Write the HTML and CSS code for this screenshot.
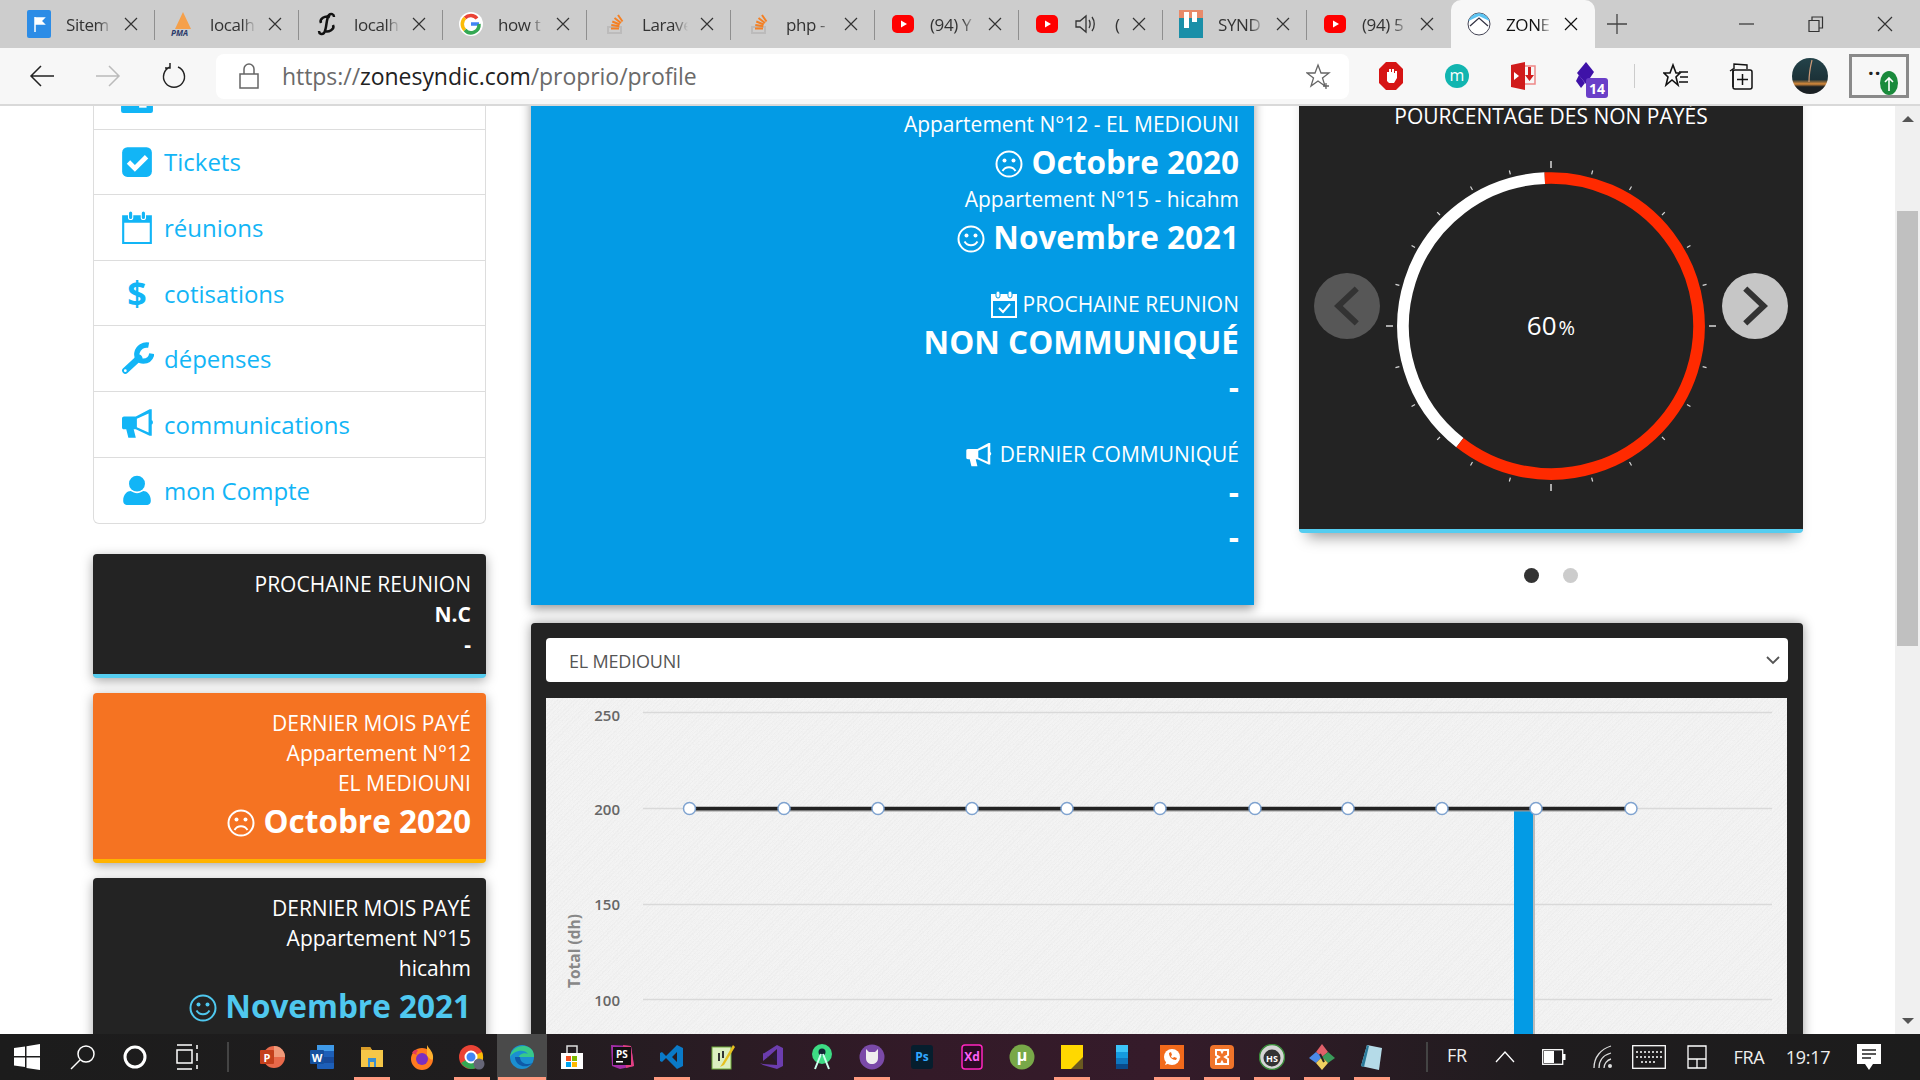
FILE: index.html
```html
<!DOCTYPE html>
<html lang="fr">
<head>
    <meta charset="UTF-8">
    <title>ZONE SYNDIC</title>
    <link rel="stylesheet" href="styles.css">
</head>
<body>
<svg class="defs" width="0" height="0">
    <symbol id="i-x" viewBox="0 0 14 14"><path d="M1 1l12 12M13 1L1 13" fill="none" stroke="currentColor" stroke-width="1.2"/></symbol>
    <symbol id="i-yt" viewBox="0 0 24 24"><rect x="1" y="3" width="22" height="18" rx="5" fill="#f00"/><path d="M10 8.5l6 3.5-6 3.5z" fill="#fff"/></symbol>
    <symbol id="i-so" viewBox="0 0 24 24"><path d="M5 15h13v6H5z" fill="none" stroke="#bcbbbb" stroke-width="2"/><path d="M8 16.5h8M8.300 13l8 1.200M9.300 9.500l7.500 3M11.500 6l6.500 5M15 3l4.500 6.500" fill="none" stroke="#f48024" stroke-width="2"/></symbol>
    <symbol id="i-smile" viewBox="0 0 28 28"><circle cx="14" cy="14" r="12.500" fill="none" stroke="currentColor" stroke-width="2"/><circle cx="9.500" cy="10.500" r="2" fill="currentColor"/><circle cx="18.500" cy="10.500" r="2" fill="currentColor"/><path d="M7.500 16.500c3 5 10 5 13 0" fill="none" stroke="currentColor" stroke-width="2"/></symbol>
    <symbol id="i-frown" viewBox="0 0 28 28"><circle cx="14" cy="14" r="12.500" fill="none" stroke="currentColor" stroke-width="2"/><circle cx="9.500" cy="10.500" r="2" fill="currentColor"/><circle cx="18.500" cy="10.500" r="2" fill="currentColor"/><path d="M7.500 21c3-5 10-5 13 0" fill="none" stroke="currentColor" stroke-width="2"/></symbol>
    <symbol id="i-horn" viewBox="0 0 32 28"><path fill-rule="evenodd" d="M26 0h2v10.500c1.500.5 1.500 3.500 0 4V25h-2L13 19h-2l2 8H6l-2-8H2c-1.500 0-2-1-2-2V9c0-1 .5-2 2-2h11zM14 9v8l11 5V4z" fill="currentColor"/></symbol>
    <filter id="paper" x="0" y="0" width="100%" height="100%"><feTurbulence type="fractalNoise" baseFrequency=".8" numOctaves="2" seed="4"/><feColorMatrix values="0 0 0 0 .6  0 0 0 0 .6  0 0 0 0 .6  0 0 0 .3 -.11"/></filter>
</svg>

<div class="app">
    <!-- onglets -->
    <div class="tabs">
        <div class="tab"><svg class="fav" viewBox="0 0 24 24"><rect width="24" height="28" y="-2" rx="2" fill="#2c8ce6"/><path d="M8 5v15M8 6h9l-3 3 3 3H8" fill="#fff" stroke="#fff" stroke-width="1.500"/></svg><span class="tab-title">Sitem</span><svg class="tab-x"><use href="#i-x"/></svg></div>
        <div class="tab"><svg class="fav" viewBox="0 0 24 24"><path d="M12 0l2 17H4zM12 0l8 17h-6z" fill="#f5a04a"/><text x="0" y="24" class="fav-pma">PMA</text></svg><span class="tab-title">localh</span><svg class="tab-x"><use href="#i-x"/></svg></div>
        <div class="tab"><svg class="fav" viewBox="0 0 24 24"><path d="M19 5c0-3-3-4-5-2-3 3-2 14-5 18-2 2-5 1-5-2M6 11c-2-4 4-8 9-6M18 13c2 4-4 8-9 6" fill="none" stroke="#111" stroke-width="2.500"/></svg><span class="tab-title">localh</span><svg class="tab-x"><use href="#i-x"/></svg></div>
        <div class="tab"><svg class="fav" viewBox="0 0 24 24"><circle cx="12" cy="12" r="12" fill="#fff"/><path d="M20 12h-8" stroke="#4285f4" stroke-width="3.500"/><path d="M18 6.500a8 8 0 0 0-12-.5" fill="none" stroke="#ea4335" stroke-width="3.500"/><path d="M6 6a8 8 0 0 0 0 12" fill="none" stroke="#fbbc05" stroke-width="3.500"/><path d="M6 18a8 8 0 0 0 14-6" fill="none" stroke="#34a853" stroke-width="3.500"/></svg><span class="tab-title">how t</span><svg class="tab-x"><use href="#i-x"/></svg></div>
        <div class="tab"><svg class="fav"><use href="#i-so"/></svg><span class="tab-title">Larave</span><svg class="tab-x"><use href="#i-x"/></svg></div>
        <div class="tab"><svg class="fav"><use href="#i-so"/></svg><span class="tab-title">php -</span><svg class="tab-x"><use href="#i-x"/></svg></div>
        <div class="tab"><svg class="fav"><use href="#i-yt"/></svg><span class="tab-title">(94) Y</span><svg class="tab-x"><use href="#i-x"/></svg></div>
        <div class="tab"><svg class="fav"><use href="#i-yt"/></svg><svg class="fav speaker" viewBox="0 0 24 24"><path d="M3 9h4l6-5v16l-6-5H3z" fill="none" stroke="#333" stroke-width="1.300"/><path d="M16 8c1.500 2 1.500 6 0 8M19 5c3 4 3 10 0 14" fill="none" stroke="#333" stroke-width="1.300"/></svg><span class="tab-title short">(</span><svg class="tab-x"><use href="#i-x"/></svg></div>
        <div class="tab"><svg class="fav" viewBox="0 0 24 24"><rect width="24" height="28" y="-2" fill="#1a8fa8"/><rect y="-2" width="24" height="8" fill="#e88a6a"/><rect x="5" y="0" width="5" height="16" fill="#fff"/><rect x="13" y="0" width="5" height="10" fill="#fff"/></svg><span class="tab-title">SYND</span><svg class="tab-x"><use href="#i-x"/></svg></div>
        <div class="tab no-sep"><svg class="fav"><use href="#i-yt"/></svg><span class="tab-title">(94) 5</span><svg class="tab-x"><use href="#i-x"/></svg></div>
        <div class="tab active"><svg class="fav" viewBox="0 0 24 24"><circle cx="12" cy="12" r="11" fill="#fff" stroke="#445" stroke-width="1"/><path d="M1.500 9a11 11 0 0 1 21 0L12 4z" fill="#5cc4f2"/><path d="M3 14l9-8 9 8" fill="none" stroke="#334" stroke-width="1.300"/></svg><span class="tab-title">ZONE</span><svg class="tab-x"><use href="#i-x"/></svg></div>
        <svg class="new-tab" viewBox="0 0 20 20"><path d="M10 0v20M0 10h20" stroke="#444" stroke-width="1.300"/></svg>
        <div class="win-btns">
            <svg viewBox="0 0 16 16"><path d="M0 8h15" stroke="#333" stroke-width="1.200"/></svg>
            <svg viewBox="0 0 16 16"><path d="M1 4.500h10v11H1zM4 4.500V1h10.500v11H11" fill="none" stroke="#333" stroke-width="1.200"/></svg>
            <svg viewBox="0 0 16 16"><path d="M1 1l14 14M15 1L1 15" stroke="#333" stroke-width="1.200"/></svg>
        </div>
    </div>

    <!-- barre d'adresse -->
    <div class="toolbar">
        <svg class="tool back" viewBox="0 0 26 26"><path d="M25 13H2M12 3L2 13l10 10" fill="none" stroke="#222" stroke-width="1.500"/></svg>
        <svg class="tool fwd" viewBox="0 0 26 26"><path d="M1 13h23M14 3l10 10-10 10" fill="none" stroke="#bbb" stroke-width="1.500"/></svg>
        <svg class="tool reload" viewBox="0 0 26 26"><path d="M9 4a10.500 10.500 0 1 0 8 0M9 0v5H4" fill="none" stroke="#222" stroke-width="1.500"/></svg>
        <div class="address">
            <svg class="lock" viewBox="0 0 20 26"><path d="M5 11V6a5 5 0 0 1 10 0v5" fill="none" stroke="#666" stroke-width="1.500"/><rect x="1" y="11" width="18" height="14" fill="none" stroke="#666" stroke-width="1.500"/></svg>
            <span class="url">https://<b>zonesyndic.com</b>/proprio/profile</span>
            <svg class="star" viewBox="0 0 26 26"><path d="M12 2l3 8h8l-6.500 5 2.500 8-7-5-7 5 2.500-8L1 10h8z" fill="none" stroke="#666" stroke-width="1.300"/><path d="M20 20v6M17 23h6" stroke="#666" stroke-width="1.300"/></svg>
        </div>
        <div class="ext-group">
            <svg class="ext e1" viewBox="0 0 26 30"><path d="M8 1h10l7 7v14l-7 7H8l-7-7V8z" fill="#d61414"/><path d="M9 20v-9h2V8h2v3h1V8h2v4h1v-2h2v7l-3 5h-5z" fill="#fff"/></svg>
            <svg class="ext e2" viewBox="0 0 26 26"><circle cx="13" cy="13" r="12" fill="#12b5b0"/><text x="13" y="18" class="ext-m">m</text></svg>
            <svg class="ext e3" viewBox="0 0 26 28"><path d="M1 3l14-3v28L1 25z" fill="#d01c1c"/><path d="M15 4h10v18H15" fill="none" stroke="#e88" stroke-width="1.500"/><path d="M18 5h3v8h3l-4.500 6-4.500-6h3z" fill="#d01c1c"/><path d="M4 10l5 4-5 4z" fill="#fff"/></svg>
            <svg class="ext e4" viewBox="0 0 34 36"><path d="M12 0l8 10-8 12L3 11z" fill="#3f12a8"/><path d="M5 13l6 8-4 5-5-7z" fill="#3f12a8"/><rect x="12" y="16" width="22" height="20" rx="3" fill="#6a3fc8"/><text x="23" y="32" class="ext-badge">14</text></svg>
            <span class="tool-sep"></span>
            <svg class="ext e5" viewBox="0 0 26 26"><path d="M10 2l3 8h4l-4 4 2 8-6-5-6 5 2-8-4-4h6z" fill="none" stroke="#111" stroke-width="1.600"/><path d="M16 9h9M17 14h8M16 19h9" stroke="#111" stroke-width="1.600"/></svg>
            <svg class="ext e6" viewBox="0 0 26 28"><path d="M6 7V2l13 1v4M2 9l3-2v18" fill="none" stroke="#111" stroke-width="1.400"/><rect x="5" y="8" width="19" height="19" rx="2" fill="none" stroke="#111" stroke-width="1.500"/><path d="M14.500 12v11M9 17.500h11" stroke="#111" stroke-width="1.500"/></svg>
            <svg class="avatar" viewBox="0 0 36 36"><defs><linearGradient id="sky" x1="0" y1="0" x2="0" y2="1"><stop offset="0" stop-color="#24434a"/><stop offset=".6" stop-color="#1c3238"/><stop offset=".72" stop-color="#d98a3a"/><stop offset=".8" stop-color="#1a2024"/></linearGradient></defs><circle cx="18" cy="18" r="18" fill="url(#sky)"/><path d="M20 2c-2 8-3 14-3 22" stroke="#c97" stroke-width="1.200" fill="none"/></svg>
            <div class="menu-box"><span class="menu-dots">··</span><svg class="menu-up" viewBox="0 0 18 24"><ellipse cx="9" cy="12" rx="9" ry="12" fill="#1a8a3c"/><path d="M9 20V7M5 11l4-4 4 4" fill="none" stroke="#fff" stroke-width="1.600"/></svg></div>
        </div>
    </div>

    <div class="page">
        <div class="content">
            <div class="sidebar">
                <ul class="menu">
                    <li><svg class="menu-ico" viewBox="0 0 32 32"><path d="M1 8h30v22a2 2 0 0 1-2 2H3a2 2 0 0 1-2-2z" fill="#12b5f6"/><rect x="18" y="22" width="7" height="5" fill="#fff"/></svg></li>
                    <li><svg class="menu-ico" viewBox="0 0 32 32"><rect x="2" y="2" width="28" height="28" rx="5" fill="#12b5f6"/><path d="M8 16l6 6 11-11" fill="none" stroke="#fff" stroke-width="4.500"/></svg><span>Tickets</span></li>
                    <li><svg class="menu-ico" viewBox="0 0 32 32"><path d="M3 6h26v25H3z" fill="none" stroke="#12b5f6" stroke-width="2"/><path d="M3 6h26v6H3z" fill="#12b5f6"/><rect x="8" y="1" width="4" height="8" rx="2" fill="#12b5f6" stroke="#fff"/><rect x="20" y="1" width="4" height="8" rx="2" fill="#12b5f6" stroke="#fff"/></svg><span>réunions</span></li>
                    <li><span class="menu-dollar">$</span><span>cotisations</span></li>
                    <li><svg class="menu-ico" viewBox="0 0 32 32"><path d="M5 27L18 15" stroke="#12b5f6" stroke-width="6" stroke-linecap="round"/><path d="M27 3a9.500 9.500 0 0 0-11 7c-1 5 2 8 6 8 4 0 7-2 8-7" fill="none" stroke="#12b5f6" stroke-width="5"/><circle cx="5" cy="27" r="1.300" fill="#fff"/></svg><span>dépenses</span></li>
                    <li><svg class="menu-ico horn-ico"><use href="#i-horn"/></svg><span>communications</span></li>
                    <li><svg class="menu-ico" viewBox="0 0 32 32"><circle cx="16" cy="10" r="7.500" fill="#12b5f6"/><path d="M3 26c0-6 4-9 7-9 2 1 4 2 6 2s4-1 6-2c3 0 7 3 7 9 0 3-2 4-4 4H7c-2 0-4-1-4-4z" fill="#12b5f6"/></svg><span>mon Compte</span></li>
                </ul>

                <div class="stat stat-dark">
                    <div>PROCHAINE REUNION</div>
                    <div class="bold">N.C</div>
                    <div class="bold">-</div>
                </div>
                <div class="stat stat-orange">
                    <div>DERNIER MOIS PAYÉ</div>
                    <div>Appartement N°12</div>
                    <div>EL MEDIOUNI</div>
                    <div class="big"><svg class="face"><use href="#i-frown"/></svg> Octobre 2020</div>
                </div>
                <div class="stat stat-dark">
                    <div>DERNIER MOIS PAYÉ</div>
                    <div>Appartement N°15</div>
                    <div>hicahm</div>
                    <div class="big teal"><svg class="face"><use href="#i-smile"/></svg> Novembre 2021</div>
                </div>
            </div>

            <div class="main">
                <div class="top-row">
                    <div class="info">
                        <div class="label"><span class="dollar">$</span></div>
                        <div class="label">Appartement N°12 - EL MEDIOUNI</div>
                        <div class="big"><svg class="face"><use href="#i-frown"/></svg> Octobre 2020</div>
                        <div class="label">Appartement N°15 - hicahm</div>
                        <div class="big"><svg class="face"><use href="#i-smile"/></svg> Novembre 2021</div>

                        <div class="label section"><svg class="label-ico" viewBox="0 0 26 28"><path d="M1 5h24v22H1z" fill="none" stroke="#fff" stroke-width="2"/><path d="M1 5h24v6H1z" fill="#fff"/><rect x="5" y="1" width="4" height="7" rx="2" fill="#fff" stroke="#039be5"/><rect x="17" y="1" width="4" height="7" rx="2" fill="#fff" stroke="#039be5"/><path d="M8 18l4 4 7-8" fill="none" stroke="#fff" stroke-width="2"/></svg> PROCHAINE REUNION</div>
                        <div class="big">NON COMMUNIQUÉ</div>
                        <div class="big">-</div>

                        <div class="label section"><svg class="label-ico horn-small"><use href="#i-horn"/></svg> DERNIER COMMUNIQUÉ</div>
                        <div class="big">-</div>
                        <div class="big">-</div>
                    </div>

                    <div class="gauge-col">
                        <div class="gauge-card">
                            <div class="gauge-title">POURCENTAGE DES NON PAYÉS</div>
                            <svg class="gauge" viewBox="0 0 340 340">
                                <g class="ticks">
                                    <path class="major" d="M170 5v7M170 328v7M5 170h7M328 170h7"/>
                                    <g class="minor">
                                        <path transform="rotate(15 170 170)" d="M170 9v4"/>
                                        <path transform="rotate(30 170 170)" d="M170 9v4"/>
                                        <path transform="rotate(45 170 170)" d="M170 9v4"/>
                                        <path transform="rotate(60 170 170)" d="M170 9v4"/>
                                        <path transform="rotate(75 170 170)" d="M170 9v4"/>
                                        <path transform="rotate(105 170 170)" d="M170 9v4"/>
                                        <path transform="rotate(120 170 170)" d="M170 9v4"/>
                                        <path transform="rotate(135 170 170)" d="M170 9v4"/>
                                        <path transform="rotate(150 170 170)" d="M170 9v4"/>
                                        <path transform="rotate(165 170 170)" d="M170 9v4"/>
                                        <path transform="rotate(195 170 170)" d="M170 9v4"/>
                                        <path transform="rotate(210 170 170)" d="M170 9v4"/>
                                        <path transform="rotate(225 170 170)" d="M170 9v4"/>
                                        <path transform="rotate(240 170 170)" d="M170 9v4"/>
                                        <path transform="rotate(255 170 170)" d="M170 9v4"/>
                                        <path transform="rotate(285 170 170)" d="M170 9v4"/>
                                        <path transform="rotate(300 170 170)" d="M170 9v4"/>
                                        <path transform="rotate(315 170 170)" d="M170 9v4"/>
                                        <path transform="rotate(330 170 170)" d="M170 9v4"/>
                                        <path transform="rotate(345 170 170)" d="M170 9v4"/>
                                    </g>
                                </g>
                                <path class="ring ring-white" d="M78.900 286.600A148 148 0 0 1 163.800 22.130"/>
                                <path class="ring ring-red" d="M163.800 22.130A148 148 0 1 1 78.900 286.600"/>
                                <text x="170" y="179" class="gauge-val">60<tspan class="gauge-pct" dx="2">%</tspan></text>
                            </svg>
                            <div class="car-btn car-prev"><svg viewBox="0 0 24 36"><path d="M21 2L4 18l17 16" fill="none" stroke="#333" stroke-width="5.500"/></svg></div>
                            <div class="car-btn car-next"><svg viewBox="0 0 24 36"><path d="M3 2l17 16L3 34" fill="none" stroke="#333" stroke-width="5.500"/></svg></div>
                        </div>
                        <div class="dots"><span class="dot on"></span><span class="dot"></span></div>
                    </div>
                </div>

                <div class="chart-card">
                    <div class="select"><span>EL MEDIOUNI</span><svg class="select-arrow" viewBox="0 0 14 9"><path d="M1 1l6 6 6-6" fill="none" stroke="#555" stroke-width="1.800"/></svg></div>
                    <svg class="chart" viewBox="0 0 1241 400">
                        <rect width="1241" height="400" filter="url(#paper)"/>
                        <g class="grid">
                            <path d="M97 14.500h1129M97 110.500h1129M97 206.500h1129M97 301.500h1129M97 397.500h1129"/>
                        </g>
                        <g class="y-labels">
                            <text x="74" y="23">250</text>
                            <text x="74" y="117">200</text>
                            <text x="74" y="212">150</text>
                            <text x="74" y="308">100</text>
                        </g>
                        <text class="y-title" transform="translate(34 253) rotate(-90)">Total (dh)</text>
                        <rect x="987" y="112" width="2" height="288" fill="#bbb"/>
                        <rect x="968" y="112" width="19" height="288" fill="#039be5"/>
                        <path class="line-shadow" d="M143 112h942"/>
                        <path class="line" d="M143 110.500h942"/>
                        <g class="points">
                            <circle cx="143.500" cy="110.500" r="6"/><circle cx="238" cy="110.500" r="6"/><circle cx="332" cy="110.500" r="6"/><circle cx="426" cy="110.500" r="6"/><circle cx="521" cy="110.500" r="6"/><circle cx="614" cy="110.500" r="6"/><circle cx="709" cy="110.500" r="6"/><circle cx="802" cy="110.500" r="6"/><circle cx="896" cy="110.500" r="6"/><circle cx="990" cy="110.500" r="6"/><circle cx="1085" cy="110.500" r="6"/>
                        </g>
                    </svg>
                </div>
            </div>
        </div>
        <div class="scrollbar">
            <span class="arrow-up"></span>
            <span class="thumb"></span>
            <span class="arrow-down"></span>
        </div>
    </div>

    <!-- barre des taches -->
    <div class="taskbar">
        <div class="sys sys-start"><svg viewBox="0 0 26 26"><path d="M0 4l11-1.500V12H0zM12.500 2.300L26 0v12H12.500zM0 13.500h11V23L0 21.500zM12.500 13.500H26V26l-13.500-2z" fill="#fff"/></svg></div>
        <div class="sys sys-search"><svg viewBox="0 0 26 26"><circle cx="16" cy="10" r="8" fill="none" stroke="#fff" stroke-width="1.500"/><path d="M10 16L1 25" stroke="#fff" stroke-width="1.500"/></svg></div>
        <div class="sys sys-cortana"><svg viewBox="0 0 26 26"><circle cx="13" cy="13" r="10" fill="none" stroke="#fff" stroke-width="3"/></svg></div>
        <div class="sys sys-view"><svg viewBox="0 0 26 26"><path d="M1 1h15M1 25h15M1 6h15v13H1zM21 1v4M21 9v8M21 21v4" fill="none" stroke="#fff" stroke-width="1.500"/></svg></div>
        <span class="tb-sep first"></span>
        <div class="slots">
            <div class="slot"><svg viewBox="0 0 26 26"><circle cx="15" cy="13" r="11" fill="#e8694a"/><path d="M15 2a11 11 0 0 1 11 11H15z" fill="#f09a7a"/><rect x="1" y="6" width="14" height="14" rx="1" fill="#c4401c"/><text x="8" y="17.500" class="ti ti-w">P</text></svg></div>
            <div class="slot"><svg viewBox="0 0 26 26"><rect x="8" y="1" width="17" height="24" rx="1" fill="#1d5fb8"/><path d="M8 1h17v6H8z" fill="#3f9ae8"/><path d="M8 13h17v6H8z" fill="#174a9a"/><rect x="1" y="6" width="14" height="14" rx="1" fill="#14509e"/><text x="8" y="17.500" class="ti ti-w">W</text></svg></div>
            <div class="slot open"><svg viewBox="0 0 26 26"><path d="M2 3h9l2 3h11v17H2z" fill="#f5c748"/><path d="M2 3h9l2 3H2z" fill="#d99c28"/><path d="M9 23v-9h8v9h-2v-5h-4v5z" fill="#3a8fd0"/></svg></div>
            <div class="slot"><svg viewBox="0 0 26 26"><circle cx="13" cy="15" r="11" fill="#ff7a1f"/><path d="M18 1c2 4 7 7 6 14-1 2-3 0-6-3z" fill="#ffb12e"/><circle cx="13" cy="15" r="6" fill="#7a2fc0"/><path d="M3 9c2-4 5-4 6-2-2 1-2 3-1 4z" fill="#e23a5e"/></svg></div>
            <div class="slot open"><svg viewBox="0 0 26 26"><circle cx="12" cy="13" r="12" fill="#ea4335"/><path d="M12 13L2 19A12 12 0 0 0 17 24z" fill="#34a853"/><path d="M12 13l5 11A12 12 0 0 0 23 8z" fill="#fbbc05"/><circle cx="12" cy="13" r="5.500" fill="#4285f4" stroke="#fff" stroke-width="2"/><circle cx="20" cy="20" r="5.500" fill="#667"/></svg></div>
            <div class="slot active"><svg viewBox="0 0 26 26"><circle cx="13" cy="13" r="12" fill="#1b8fd0"/><path d="M1 13C2 4 13-1 21 4c3 2 4 5 4 9H10c0-3 6-5 9-3-4-6-15-3-18 3z" fill="#37c98a"/><path d="M6 13c0 8 10 13 18 6-8 3-13-1-13-6z" fill="#0f5aa8"/></svg></div>
            <div class="slot"><svg viewBox="0 0 26 26"><path d="M2 9h22v16H2z" fill="#fff"/><path d="M8 9V2h10v7" fill="none" stroke="#ddd" stroke-width="1.500"/><rect x="7" y="12" width="5" height="5" fill="#f25022"/><rect x="13" y="12" width="5" height="5" fill="#7fba00"/><rect x="7" y="18" width="5" height="5" fill="#00a4ef"/><rect x="13" y="18" width="5" height="5" fill="#ffb900"/></svg></div>
            <div class="slot"><svg viewBox="0 0 26 26"><path d="M2 1l20 1 3 20-14 3-8-3z" fill="#a32ea8"/><path d="M14 1l8 1 3 20-8 2z" fill="#e0407f"/><rect x="4" y="3" width="18" height="18" fill="#111"/><text x="13" y="14" class="ti ti-s">PS</text><rect x="7" y="17" width="7" height="1.500" fill="#fff"/></svg></div>
            <div class="slot open"><svg viewBox="0 0 26 26"><path d="M18 1l6 3v18l-6 3L7 14l-4 4-2-1v-8l2-1 4 4zM18 8l-5 5 5 5z" fill="#0a7ac8"/></svg></div>
            <div class="slot"><svg viewBox="0 0 26 26"><rect x="3" y="3" width="19" height="22" fill="#dcefc0" stroke="#6ea83a"/><path d="M10 9v8M14 7v7" stroke="#333" stroke-width="2"/><path d="M24 1L13 20l-2 3 4-2L26 3z" fill="#e6c020"/></svg></div>
            <div class="slot"><svg viewBox="0 0 26 26"><path d="M18 1l6 3v18l-6 3-14-4-3-2 3 1 14 1V5L9 13l-5-3z" fill="#6c3dae"/><path d="M4 9l5 4-5 4z" fill="#6c3dae"/><path d="M18 7l-5 6 5 6z" fill="#2a1a3a"/></svg></div>
            <div class="slot"><svg viewBox="0 0 26 26"><circle cx="13" cy="10" r="10" fill="#3ddc84"/><circle cx="13" cy="8" r="3.500" fill="#123"/><path d="M12 10L6 25M14 10l6 15" stroke="#cfe" stroke-width="2"/></svg></div>
            <div class="slot open"><svg viewBox="0 0 26 26"><circle cx="13" cy="13" r="12.500" fill="#7a4aa8"/><path d="M7 5l3 3h6l3-3v9c0 4-3 6-6 6s-6-2-6-6z" fill="#eee"/></svg></div>
            <div class="slot"><svg viewBox="0 0 26 26"><rect x="2" y="1" width="22" height="24" rx="3" fill="#061e2e"/><text x="13" y="17" class="ti ti-ps">Ps</text></svg></div>
            <div class="slot"><svg viewBox="0 0 26 26"><rect x="3" y="1" width="20" height="24" rx="3" fill="#2b0a24" stroke="#ff26be" stroke-width="1.500"/><text x="13" y="17" class="ti ti-xd">Xd</text></svg></div>
            <div class="slot"><svg viewBox="0 0 26 26"><circle cx="13" cy="13" r="12.500" fill="#78a848"/><text x="13" y="17" class="ti ti-mu">µ</text></svg></div>
            <div class="slot open"><svg viewBox="0 0 26 26"><rect x="2" y="1" width="22" height="24" fill="#ffd800"/><path d="M24 13v12H12z" fill="#6a5a20"/></svg></div>
            <div class="slot"><svg viewBox="0 0 26 26"><path d="M7 1h12v7H7z" fill="#3cc4f8"/><path d="M7 8h12v6H7z" fill="#159be0"/><path d="M7 14h12v6H7z" fill="#0f78c0"/><path d="M7 20h12v5H7z" fill="#0a4a8a"/></svg></div>
            <div class="slot open"><svg viewBox="0 0 26 26"><rect x="1" y="1" width="24" height="24" fill="#f26a1b"/><circle cx="13" cy="13" r="8" fill="#fff"/><path d="M6 21l2-5 3 3z" fill="#fff"/><path d="M10 9c0 4 3 7 7 7l1-2-3-1-1 1c-1 0-2-1-2-2l1-1-1-3z" fill="#f26a1b"/></svg></div>
            <div class="slot open"><svg viewBox="0 0 26 26"><rect x="1" y="1" width="24" height="24" rx="4" fill="#f0742a"/><path d="M7 6h5l1 2 1-2h5v5l-3 2 3 2v5h-5l-1-2-1 2H7v-5l3-2-3-2z" fill="none" stroke="#fff" stroke-width="2"/></svg></div>
            <div class="slot open"><svg viewBox="0 0 26 26"><circle cx="13" cy="13" r="12.500" fill="#d5d5d5" stroke="#3a8a3a" stroke-width="1.500"/><circle cx="13" cy="14" r="8.500" fill="#333"/><text x="13" y="18" class="ti ti-hs">HS</text></svg></div>
            <div class="slot open"><svg viewBox="0 0 26 26"><path d="M13 0l6 8-6 5-6-5z" fill="#e0606a"/><path d="M19 8l7 6-7 5-6-6z" fill="#3a9a5a"/><path d="M7 8l6 5-6 6-7-5z" fill="#4a8ae8"/><path d="M7 19l6-6 6 6-6 7z" fill="#f0d060"/><path d="M11 10l4 8" stroke="#222" stroke-width="2"/></svg></div>
            <div class="slot open"><svg viewBox="0 0 26 26"><path d="M8 1l15 3-3 22-18-4z" fill="#b5dbe8"/><path d="M2 22L8 1l2 1-5 21z" fill="#2a7a9a"/></svg></div>
        </div>
        <span class="tb-sep"></span>
        <div class="tray t-fr">FR</div>
        <div class="tray t-up"><svg viewBox="0 0 20 12"><path d="M1 11l9-10 9 10" fill="none" stroke="#fff" stroke-width="1.300"/></svg></div>
        <div class="tray t-bat"><svg viewBox="0 0 24 16"><rect x=".7" y=".7" width="20" height="14.600" fill="none" stroke="#fff" stroke-width="1.300"/><rect x="2" y="2" width="10" height="12" fill="#fff"/><rect x="21" y="5" width="2.500" height="6" fill="#fff"/></svg></div>
        <div class="tray t-wifi"><svg viewBox="0 0 20 24"><path d="M1 23C1 12 8 4 18 1M6 23c0-8 5-13 12-15M11 23c0-4 3-8 7-9" fill="none" stroke="#ddd" stroke-width="1.300"/><circle cx="17" cy="21" r="2" fill="#ddd"/></svg></div>
        <div class="tray t-kb"><svg viewBox="0 0 34 24"><rect x=".7" y=".7" width="32.600" height="22.600" fill="none" stroke="#fff" stroke-width="1.300"/><path d="M4 7h26M4 12h26M9 17h16" stroke="#fff" stroke-width="1.300" stroke-dasharray="2 2"/></svg></div>
        <div class="tray t-tablet"><svg viewBox="0 0 20 24"><path d="M1 1h18v22H1zM1 14h18M10 14v9" fill="none" stroke="#fff" stroke-width="1.300"/></svg></div>
        <div class="tray t-lang">FRA</div>
        <div class="tray t-time">19:17</div>
        <div class="tray t-note"><svg viewBox="0 0 24 26"><path d="M0 0h24v20h-8l-4 6-4-6H0z" fill="#fff"/><path d="M5 6h14M5 10h14M5 14h9" stroke="#222" stroke-width="1.300"/></svg></div>
    </div>
</div>
</body>
</html>
```

FILE: styles.css
```css
* { box-sizing: border-box; }
html, body { margin: 0; padding: 0; height: 100%; overflow: hidden; }
body { font-family: "Open Sans", sans-serif; background: #fff; }
.defs { display: block; height: 0; }
.app { width: 1920px; height: 1080px; display: flex; flex-direction: column; }

/* onglets */
.tabs { height: 48px; flex: none; background: #cdcdcd; display: flex; align-items: center; padding-left: 11px; }
.tab { width: 144px; height: 48px; display: flex; align-items: center; padding-left: 16px; position: relative; color: #333; }
.tab::after { content: ""; position: absolute; right: 0; top: 10px; height: 30px; width: 1px; background: #8f8f8f; }
.tab.no-sep::after, .tab.active::after { display: none; }
.tab.active { background: #f7f7f7; border-radius: 10px 10px 0 0; color: #111; }
.fav { width: 24px; height: 24px; flex: none; overflow: visible; }
.fav-pma { font-size: 8px; font-weight: 700; font-style: italic; fill: #2a3a6a; }
.speaker { margin-left: 14px; }
.tab-title { margin-left: 15px; width: 46px; flex: none; white-space: nowrap; font-size: 17px; letter-spacing: -.4px; -webkit-mask-image: linear-gradient(90deg, #000 70%, transparent); mask-image: linear-gradient(90deg, #000 70%, transparent); }
.tab-title.short { width: 8px; margin-left: 18px; }
.tab-x { width: 14px; height: 14px; margin-left: 12px; flex: none; }
.tab-title.short + .tab-x { margin-left: 9px; }
.new-tab { width: 20px; height: 20px; margin-left: 12px; }
.win-btns { margin-left: auto; display: flex; gap: 53px; padding-right: 27px; }
.win-btns svg { width: 16px; height: 16px; }

/* barre d'adresse */
.toolbar { height: 58px; flex: none; background: #f7f7f7; border-bottom: 2px solid #d9d9d9; display: flex; align-items: center; padding-left: 29px; }
.tool { width: 26px; height: 26px; flex: none; }
.fwd { margin-left: 40px; }
.reload { margin-left: 40px; }
.address { margin-left: 29px; width: 1133px; height: 45px; background: #fff; border-radius: 8px; display: flex; align-items: center; padding-left: 23px; padding-right: 17px; }
.lock { width: 20px; height: 26px; flex: none; }
.url { margin-left: 23px; font-size: 23px; color: #6a6a6a; letter-spacing: -.05px; }
.url b { font-weight: 400; color: #222; }
.star { width: 26px; height: 26px; margin-left: auto; }
.ext-group { flex: 1; display: flex; align-items: center; position: relative; }
.ext { flex: none; }
.e1 { width: 26px; height: 30px; margin-left: 29px; }
.e2 { width: 26px; height: 26px; margin-left: 40px; }
.e3 { width: 26px; height: 28px; margin-left: 40px; }
.e4 { width: 34px; height: 36px; margin-left: 38px; margin-top: 8px; }
.tool-sep { width: 1px; height: 24px; background: #ccc; margin-left: 26px; }
.e5 { width: 26px; height: 26px; margin-left: 28px; }
.e6 { width: 26px; height: 28px; margin-left: 39px; }
.avatar { width: 36px; height: 36px; margin-left: 38px; flex: none; }
.menu-box { width: 60px; height: 44px; margin-left: 21px; border: 3px solid #8a8a8a; display: flex; align-items: center; padding-left: 16px; gap: 0; }
.menu-dots { font-size: 20px; font-weight: 700; line-height: 1; color: #222; letter-spacing: 1px; margin-top: -6px; }
.menu-up { width: 18px; height: 24px; margin-left: -1px; margin-top: 14px; }
.ext-m { font-size: 16px; fill: #fff; text-anchor: middle; }
.ext-badge { font-size: 14px; font-weight: 700; fill: #fff; text-anchor: middle; }

/* page */
.page { flex: 1; min-height: 0; display: flex; overflow: hidden; }
.content { width: 1895px; flex: none; height: 1100px; margin-top: -42px; padding-left: 93px; display: flex; gap: 45px; align-items: flex-start; }
.sidebar { width: 393px; flex: none; display: flex; flex-direction: column; }
.menu { list-style: none; margin: 0 0 30px; padding: 0; border: 1px solid #ddd; border-top: 0; border-radius: 0 0 6px 6px; }
.menu li { height: 65.6px; border-bottom: 1px solid #ddd; display: flex; align-items: center; padding-left: 26px; color: #12b5f6; font-size: 24px; }
.menu li:last-child { border-bottom: 0; }
.menu-ico { width: 34px; height: 34px; flex: none; margin-right: 10px; }
.horn-ico { color: #12b5f6; margin-left: 2px; margin-right: 8px; }
.menu-dollar { width: 34px; margin-right: 10px; text-align: center; font-size: 34px; font-weight: 700; line-height: 1; }

.stat { border-radius: 4px; padding: 15px; text-align: right; color: #fff; font-size: 21px; line-height: 30px; margin-bottom: 15px; box-shadow: 0 3px 12px rgba(0, 0, 0, .35); flex: none; }
.stat-dark { background: #232323; border-bottom: 4px solid #55cdf0; }
.stat-orange { background: #f57322; border-bottom: 4px solid #ffb300; }
.bold { font-weight: 700; }
.big { font-size: 31.500px; line-height: 45px; font-weight: 700; white-space: nowrap; }
.stat .big { line-height: 46px; }
.teal { color: #4fc8ef; }
.face { width: 28px; height: 28px; vertical-align: -4px; }

.main { width: 1272px; flex: none; }
.top-row { display: flex; gap: 45px; height: 541px; }
.info { width: 723px; flex: none; background: #039be5; color: #fff; text-align: right; padding: 15px 15px 0; box-shadow: 0 4px 10px rgba(0, 0, 0, .4); }
.label { font-size: 21px; line-height: 30px; white-space: nowrap; }
.section { margin-top: 30px; }
.dollar { font-weight: 700; font-size: 32px; line-height: 0; vertical-align: -2px; margin-right: 204px; }
.label-ico { width: 26px; height: 28px; vertical-align: -6px; }
.horn-small { color: #fff; width: 28px; height: 24px; vertical-align: -5px; }

.gauge-col { width: 504px; flex: none; }
.gauge-card { position: relative; height: 469px; background: #232323; border-bottom: 4px solid #55cdf0; border-radius: 0 0 4px 4px; padding-top: 37px; box-shadow: 0 12px 14px -8px rgba(0, 0, 0, .4); }
.gauge-title { text-align: center; color: #fff; font-size: 21px; line-height: 30px; }
.gauge { display: block; width: 340px; height: 340px; margin: 25px auto 0; }
.ticks path { fill: none; stroke: #d8d8d8; }
.major { stroke-width: 1.500; }
.minor path { stroke-width: 1.200; }
.ring { fill: none; stroke-width: 11.700; }
.ring-white { stroke: #fff; }
.ring-red { stroke: #ff2a00; }
.gauge-val { font-size: 26px; fill: #fff; text-anchor: middle; }
.gauge-pct { font-size: 20px; }
.car-btn { position: absolute; top: 209px; width: 66px; height: 66px; border-radius: 50%; display: flex; align-items: center; justify-content: center; }
.car-btn svg { width: 26px; height: 42px; }
.car-prev { left: 15px; background: #575757; }
.car-next { right: 15px; background: #c6c6c6; }
.dots { display: flex; justify-content: center; gap: 24px; margin-top: 35px; padding-right: 1px; }
.dot { width: 15px; height: 15px; border-radius: 50%; background: #ccc; }
.dot.on { background: #333; }

.chart-card { margin-top: 18px; background: #232323; border-radius: 4px 4px 0 0; padding: 15px; box-shadow: 0 0 12px rgba(0, 0, 0, .4); }
.select { height: 44px; background: #fff; border-radius: 4px; display: flex; align-items: center; justify-content: space-between; padding: 0 8px 0 23px; color: #555; font-size: 18px; letter-spacing: -.2px; }
.select span { padding-top: 1px; }
.select-arrow { width: 14px; height: 9px; }
.chart { display: block; margin-top: 16px; width: 1241px; height: 400px; background-color: #f4f4f4; background-image: repeating-linear-gradient(135deg, rgba(0, 0, 0, .014) 0 1px, transparent 1px 3px); }
.grid path { fill: none; stroke: #d9d9d9; stroke-width: 1.500; }
.y-labels text { font-size: 15px; font-weight: 600; fill: #666; text-anchor: end; }
.y-title { font-size: 15.500px; font-weight: 700; fill: #888; text-anchor: middle; }
.line { fill: none; stroke: #222; stroke-width: 3.500; }
.line-shadow { fill: none; stroke: #999; stroke-width: 3; }
.points circle { fill: #fff; stroke: #7fa3d0; stroke-width: 1.500; }

.scrollbar { width: 25px; flex: none; background: #f0f0f0; display: flex; flex-direction: column; align-items: center; }
.thumb { width: 21px; height: 435px; background: #c0c0c0; margin-top: 89px; }
.arrow-up, .arrow-down { width: 0; height: 0; border-left: 6px solid transparent; border-right: 6px solid transparent; }
.arrow-up { border-bottom: 6px solid #555; margin-top: 10px; margin-bottom: 0; }
.arrow-down { border-top: 6px solid #555; margin-top: auto; margin-bottom: 10px; }

/* barre des taches */
.taskbar { height: 46px; flex: none; display: flex; align-items: center; color: #fff; background: linear-gradient(90deg, #1c1c1c 0, #1f1d1e 25%, #331a28 48%, #351b2a 60%, #1f1c1e 80%, #1c1c1c 100%); }
.sys { height: 46px; display: flex; align-items: center; justify-content: center; flex: none; }
.sys svg { width: 26px; height: 26px; }
.sys-start { width: 54px; }
.sys-search { width: 58px; }
.sys-cortana { width: 46px; }
.sys-view { width: 62px; }
.tb-sep { width: 2px; height: 30px; background: #444; flex: none; }
.tb-sep.first { margin-left: 7px; }
.slots { display: flex; margin-left: 18px; margin-right: 29px; }
.slot { width: 50px; height: 46px; display: flex; align-items: center; justify-content: center; flex: none; }
.slot svg { width: 26px; height: 26px; }
.slot.open { background: linear-gradient(#ff9a80, #ff9a80) center bottom / 36px 3px no-repeat; }
.slot.active { background: linear-gradient(#ff9a80, #ff9a80) center bottom / 48px 3px no-repeat, #4a4a4a; }
.ti { text-anchor: middle; font-weight: 700; }
.ti-w { font-size: 11px; fill: #fff; }
.ti-s { font-size: 10px; fill: #fff; }
.ti-ps { font-size: 12px; fill: #31a8ff; }
.ti-xd { font-size: 12px; fill: #ff61f6; }
.ti-mu { font-size: 16px; fill: #fff; }
.ti-hs { font-size: 9px; fill: #fff; }
.tray { height: 46px; display: flex; align-items: center; justify-content: center; flex: none; font-size: 18px; color: #eee; letter-spacing: -.3px; }
.t-fr { width: 60px; margin-left: -1px; padding-bottom: 4px; }
.t-up { width: 36px; } .t-up svg { width: 20px; height: 12px; }
.t-bat { width: 62px; } .t-bat svg { width: 24px; height: 16px; }
.t-wifi { width: 36px; } .t-wifi svg { width: 20px; height: 24px; }
.t-kb { width: 56px; } .t-kb svg { width: 34px; height: 24px; }
.t-tablet { width: 40px; } .t-tablet svg { width: 20px; height: 24px; }
.t-lang { width: 64px; }
.t-time { width: 54px; }
.t-note { width: 72px; margin-left: -2px; } .t-note svg { width: 24px; height: 26px; }
```
